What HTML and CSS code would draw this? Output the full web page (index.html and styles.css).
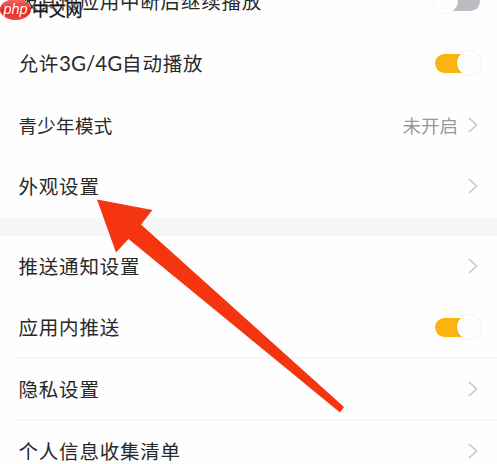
FILE: index.html
```html
<!DOCTYPE html>
<html lang="zh-CN">
<head>
<meta charset="utf-8">
<title>设置</title>
<link rel="stylesheet" href="styles.css">
</head>
<body>
<main class="screen">
  <section class="group group-first">
    <div class="row"><span class="label">被其他应用中断后继续播放</span><span class="switch off"><i class="knob"></i></span></div>
    <div class="row"><span class="label">允许<span class="latin">3G/4G</span>自动播放</span><span class="switch"><i class="knob"></i></span></div>
    <div class="row"><span class="label compact">青少年模式</span><span class="value">未开启</span><svg class="chevron" viewBox="0 0 10 16"><path d="M1 1l7.5 7L1 15"/></svg></div>
    <div class="row"><span class="label">外观设置</span><svg class="chevron" viewBox="0 0 10 16"><path d="M1 1l7.5 7L1 15"/></svg></div>
  </section>
  <section class="group">
    <div class="row"><span class="label">推送通知设置</span><svg class="chevron" viewBox="0 0 10 16"><path d="M1 1l7.5 7L1 15"/></svg></div>
    <div class="row lined"><span class="label">应用内推送</span><span class="switch"><i class="knob"></i></span></div>
    <div class="row lined"><span class="label">隐私设置</span><svg class="chevron" viewBox="0 0 10 16"><path d="M1 1l7.5 7L1 15"/></svg></div>
    <div class="row"><span class="label">个人信息收集清单</span><svg class="chevron" viewBox="0 0 10 16"><path d="M1 1l7.5 7L1 15"/></svg></div>
  </section>
  <svg class="pointer" viewBox="0 0 497 464"><path d="M97 199.5L152.5 210 141 224.500 344 407 340 412.500 128.500 239 116 252.500Z"/></svg>
  <div class="watermark"><span class="badge">php</span><span class="site">中文网</span></div>
</main>
</body>
</html>
```
FILE: styles.css
```css
body {
  margin: 0;
  background: #fefefe;
  color: #292929;
  font-family: "Noto Sans CJK SC", sans-serif;
}
.screen {
  position: relative;
  height: 464px;
  overflow: hidden;
}
.group-first {
  margin-top: -29px;
  border-bottom: 18px solid #f5f6f8;
}
.row {
  box-sizing: border-box;
  display: flex;
  align-items: center;
  height: 61.7px;
  margin-left: 14px;
  padding: 0 19px 0 4.5px;
  border-bottom: 1px solid #fcfcfc;
}
.row:last-child { border-bottom-color: transparent; }
.lined { border-bottom: 2px solid #f7f7f7; }
.label {
  margin-right: auto;
  font-size: 19.5px;
  line-height: 28px;
  letter-spacing: 0.8px;
  white-space: nowrap;
}
.latin {
  font-family: Lato, "Noto Sans CJK SC", sans-serif;
  font-size: 20.5px;
  line-height: 1;
  letter-spacing: 0;
}
.compact {
  font-size: 18.500px;
  letter-spacing: 0.3px;
}
.value {
  margin-right: 10px;
  color: #999;
  font-size: 18.500px;
  line-height: 28px;
  letter-spacing: 0;
}
.chevron {
  width: 10px;
  height: 16px;
  fill: none;
  stroke: #c6c6c6;
  stroke-width: 1.6;
}
.switch {
  display: flex;
  align-items: center;
  justify-content: flex-end;
  width: 44px;
  height: 19px;
  margin-right: -1px;
  border-radius: 10px;
  background: #fbb40f;
}
.switch.off {
  justify-content: flex-start;
  margin-right: -2px;
  background: #bdbcc1;
}
.knob {
  width: 24px;
  height: 24px;
  flex: none;
  margin-right: -2px;
  border-radius: 50%;
  background: #fefefe;
  box-shadow: 0 0 2px rgba(0, 0, 0, 0.12);
}
.off .knob { margin: 0 0 0 -2px; }
.pointer {
  position: absolute;
  top: 0;
  left: 0;
  width: 497px;
  height: 464px;
  fill: #f5350f;
}
.watermark {
  position: absolute;
  top: -3px;
  left: 0;
  display: flex;
  align-items: center;
  height: 24px;
}
.badge {
  width: 31px;
  height: 21px;
  border-radius: 50%;
  background: linear-gradient(#f57067, #e32620 55%, #ee4a42);
  color: #fff;
  font: italic 14.5px/20px "Liberation Sans", sans-serif;
  text-align: center;
}
.site {
  margin-left: 1px;
  color: #111;
  font-size: 17px;
  font-weight: 400;
  line-height: 24px;
  letter-spacing: -0.3px;
  -webkit-text-stroke: 0.3px #111;
  text-shadow: 0 0 1px #fff, 0 0 2px #fff;
}
```
